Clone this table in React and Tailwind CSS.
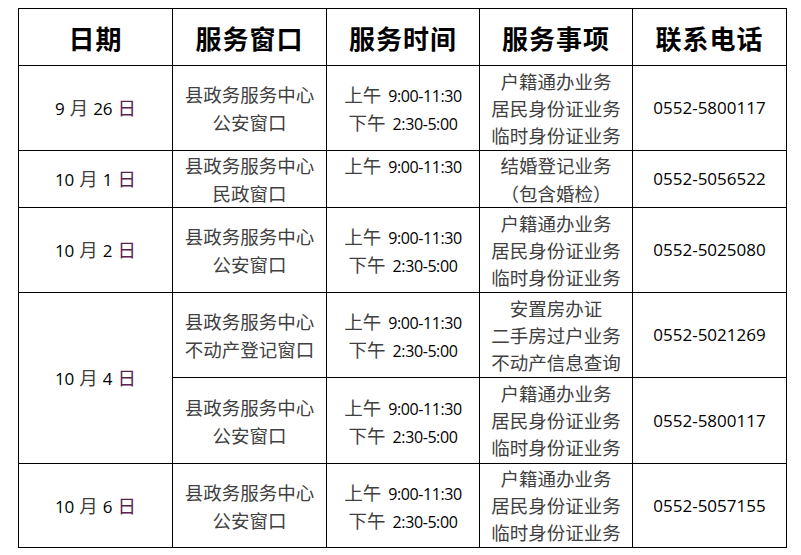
const cjk = "font-['Noto_Sans_CJK_SC',sans-serif]";
const num = "font-['Open_Sans','Noto_Sans_CJK_SC',sans-serif]";

const headers = ["日期", "服务窗口", "服务时间", "服务事项", "联系电话"];

const policeItems = ["户籍通办业务", "居民身份证业务", "临时身份证业务"];

const rows = [
  {
    date: ["9", "26"],
    window: ["县政务服务中心", "公安窗口"],
    time: true,
    items: policeItems,
    phone: "0552-5800117",
    h: "h-[85px]",
  },
  {
    date: ["10", "1"],
    window: ["县政务服务中心", "民政窗口"],
    time: "am",
    items: ["结婚登记业务", "（包含婚检）"],
    phone: "0552-5056522",
    h: "h-[57px]",
  },
  {
    date: ["10", "2"],
    window: ["县政务服务中心", "公安窗口"],
    time: true,
    items: policeItems,
    phone: "0552-5025080",
    h: "h-[85px]",
  },
  {
    date: ["10", "4"],
    span: 2,
    window: ["县政务服务中心", "不动产登记窗口"],
    time: true,
    items: ["安置房办证", "二手房过户业务", "不动产信息查询"],
    phone: "0552-5021269",
    h: "h-[85px]",
  },
  {
    skipDate: true,
    window: ["县政务服务中心", "公安窗口"],
    time: true,
    items: policeItems,
    phone: "0552-5800117",
    h: "h-[86px]",
  },
  {
    date: ["10", "6"],
    window: ["县政务服务中心", "公安窗口"],
    time: true,
    items: policeItems,
    phone: "0552-5057155",
    h: "h-[84px]",
  },
];

function DateText({ m, d }) {
  return (
    <span className="inline-flex items-baseline gap-[5px]">
      <span className={`${num} text-[17px] text-black`}>{m}</span>
      <span className={`${cjk} text-[18.5px] text-[#404040]`}>月</span>
      <span className={`${num} text-[17px] text-black`}>{d}</span>
      <span className={`${cjk} text-[18.5px] text-[#5a2150]`}>日</span>
    </span>
  );
}

function TimeLine({ label, value }) {
  return (
    <div className="flex items-baseline justify-center gap-[7px] h-[28px] leading-[28px]">
      <span className={`${cjk} text-[18.5px] text-[#404040]`}>{label}</span>
      <span className={`${num} text-[16px] tracking-[-0.4px] text-black`}>{value}</span>
    </div>
  );
}

export default function App() {
  return (
    <div className="w-[801px] h-[555px] bg-white pl-[18px] pt-[8px]">
      <table className="table-fixed border-collapse">
        <colgroup>
          <col className="w-[154px]" />
          <col className="w-[154px]" />
          <col className="w-[153px]" />
          <col className="w-[153px]" />
          <col className="w-[154px]" />
        </colgroup>
        <thead>
          <tr className="h-[57px]">
            {headers.map((t) => (
              <th
                key={t}
                className={`border border-black text-center align-middle p-0 ${cjk} text-[26px] font-bold text-black tracking-[1px]`}
              >
                {t}
              </th>
            ))}
          </tr>
        </thead>
        <tbody>
          {rows.map((r, i) => (
            <tr key={i} className={r.h}>
              {!r.skipDate && (
                <td rowSpan={r.span || 1} className="border border-black text-center align-middle p-0">
                  <DateText m={r.date[0]} d={r.date[1]} />
                </td>
              )}
              <td className={`border border-black text-center align-middle p-0 ${cjk} text-[18.5px] leading-[28px] text-[#404040]`}>
                {r.window.map((w) => (
                  <div key={w}>{w}</div>
                ))}
              </td>
              <td className="border border-black text-center align-middle p-0">
                <TimeLine label="上午" value="9:00-11:30" />
                {r.time === "am" ? <div className="h-[28px]" /> : <TimeLine label="下午" value="2:30-5:00" />}
              </td>
              <td
                className={`border border-black text-center align-middle p-0 ${cjk} text-[18.5px] text-[#404040] ${
                  r.items.length === 3 ? "leading-[27px]" : "leading-[28px]"
                }`}
              >
                {r.items.map((it) => (
                  <div key={it}>{it}</div>
                ))}
              </td>
              <td className={`border border-black text-center align-middle p-0 ${num} text-[17px] text-black`}>
                {r.phone}
              </td>
            </tr>
          ))}
        </tbody>
      </table>
    </div>
  );
}
